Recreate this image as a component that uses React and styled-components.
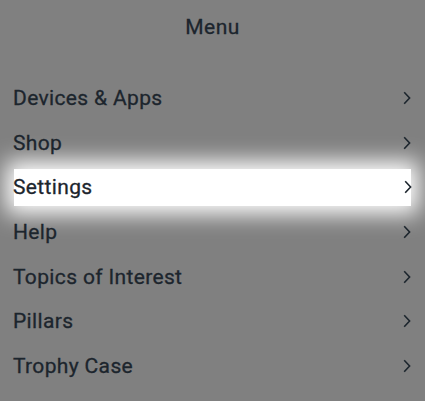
import styled, { createGlobalStyle } from 'styled-components';

const GlobalStyle = createGlobalStyle`
    html, body {
        margin: 0;
        padding: 0;
        background: #808080;
    }
    body {
        font-family: Roboto, "Noto Sans", sans-serif;
    }
`;

const Page = styled.div`
    width: 425px;
    height: 401px;
    overflow: hidden;
    background: #808080;
    color: #1c252d;
`;

const Header = styled.div`
    height: 54px;
    display: flex;
    align-items: center;
    justify-content: center;
    font-size: 21px;
    font-weight: 400;
    letter-spacing: 0.5px;
    -webkit-text-stroke: 0.3px #1c252d;
`;

const List = styled.ul`
    list-style: none;
    margin: 0;
    padding: 22px 0 0;
`;

const Row = styled.li`
    display: flex;
    align-items: center;
    justify-content: space-between;
    font-size: 21px;
    font-weight: 400;
    letter-spacing: 0.35px;
    -webkit-text-stroke: 0.3px #1c252d;
    background: ${p => (p.$active ? '#fff' : 'transparent')};
    box-shadow: ${p => (p.$active ? '0 0 22px 8px #fff' : 'none')};
    margin: ${p => (p.$active ? '4px 14px' : '0')};
    height: ${p => (p.$active ? '36.6px' : '44.6px')};
    padding: ${p => (p.$active ? '0' : '0 13px')};
`;

const Label = styled.span`
    margin-left: ${p => (p.$active ? '-1px' : '0')};
`;

const Chevron = styled.svg`
    width: 8px;
    height: 14px;
    flex: none;
    margin-right: ${p => (p.$active ? '-1px' : '1px')};
`;

const items = [
    'Devices & Apps',
    'Shop',
    'Settings',
    'Help',
    'Topics of Interest',
    'Pillars',
    'Trophy Case',
];

function App() {
    return (
        <Page>
            <GlobalStyle />
            <Header>Menu</Header>
            <List>
                {items.map((item) => {
                    const active = item === 'Settings';
                    return (
                        <Row key={item} $active={active}>
                            <Label $active={active}>{item}</Label>
                            <Chevron $active={active} viewBox="0 0 8 14">
                                <path d="M1.2 1.2 L6.6 7 L1.2 12.8" fill="none" stroke="#1c252d" strokeWidth="1.6" />
                            </Chevron>
                        </Row>
                    );
                })}
            </List>
        </Page>
    );
}

export default App;
